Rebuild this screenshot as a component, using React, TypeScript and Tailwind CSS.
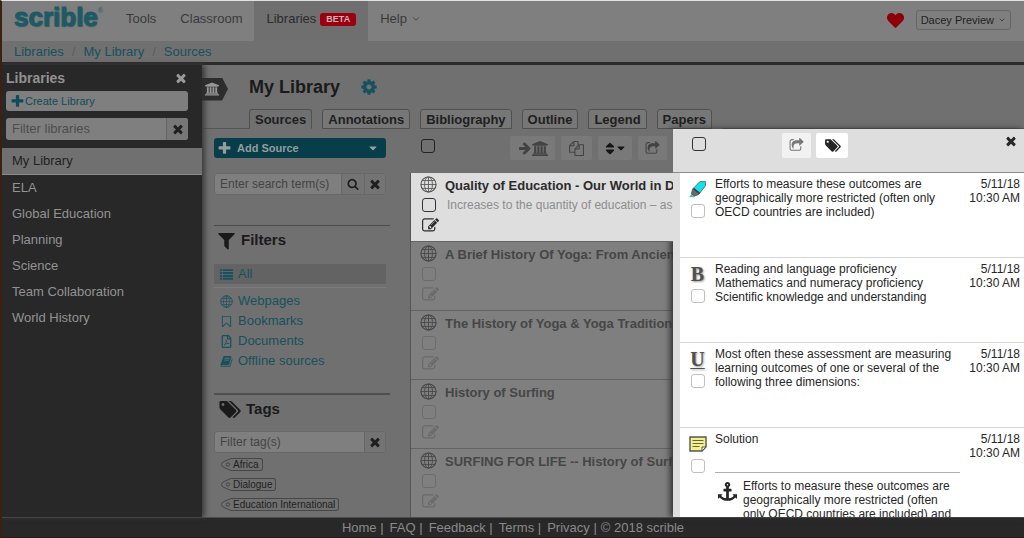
import { ReactNode } from "react";
import { FaCaretDown, FaHeart, FaRegFilePdf, FaSort } from "react-icons/fa";
import { FiChevronDown } from "react-icons/fi";

const PATHS = {
  times:
    "M1490 1322q0 40-28 68l-136 136q-28 28-68 28t-68-28l-294-294-294 294q-28 28-68 28t-68-28l-136-136q-28-28-28-68t28-68l294-294-294-294q-28-28-28-68t28-68l136-136q28-28 68-28t68 28l294 294 294-294q28-28 68-28t68 28l136 136q28 28 28 68t-28 68l-294 294 294 294q28 28 28 68z",
  plus: "M1600 736v192q0 40-28 68t-68 28h-416v416q0 40-28 68t-68 28h-192q-40 0-68-28t-28-68v-416h-416q-40 0-68-28t-28-68v-192q0-40 28-68t68-28h416v-416q0-40 28-68t68-28h192q40 0 68 28t28 68v416h416q40 0 68 28t28 68z",
  cog: "M1152 896q0-106-75-181t-181-75-181 75-75 181 75 181 181 75 181-75 75-181zm512-109v222q0 12-8 23t-20 13l-185 28q-19 54-39 91 35 50 107 138 10 12 10 25t-9 23q-27 37-99 108t-94 71q-12 0-26-9l-138-108q-44 23-91 38-16 136-29 186-7 28-36 28h-222q-14 0-24.500-8.500t-11.500-21.500l-28-184q-49-16-90-37l-141 107q-10 9-25 9-14 0-25-11-126-114-165-168-7-10-7-23 0-12 8-23 15-21 51-66.500t54-70.500q-27-50-41-99l-183-27q-13-2-21-12.500t-8-23.500v-222q0-12 8-23t19-13l186-28q14-46 39-92-40-57-107-138-10-12-10-24 0-10 9-23 26-36 98.500-107.500t94.500-71.500q13 0 26 10l138 107q44-23 91-38 16-136 29-186 7-28 36-28h222q14 0 24.500 8.500t11.500 21.500l28 184q49 16 90 37l142-107q9-9 24-9 13 0 25 10 129 119 165 170 7 8 7 22 0 12-8 23-15 21-51 66.500t-54 70.500q26 50 41 98l183 28q13 2 21 12.500t8 23.500z",
  bank: "M960 0l960 384v128h-128q0 26-20.500 45t-48.500 19h-1526q-28 0-48.500-19t-20.500-45h-128v-128zm-704 640h256v768h128v-768h256v768h128v-768h256v768h128v-768h256v768h59q28 0 48.500 19t20.500 45v64h-1664v-64q0-26 20.500-45t48.500-19h59v-768zm1595 960q28 0 48.500 19t20.500 45v128h-1920v-128q0-26 20.500-45t48.500-19h1782z",
  tags: "M576 448q0-53-37.500-90.500t-90.500-37.500-90.500 37.500-37.500 90.500 37.500 90.500 90.500 37.500 90.500-37.500 37.500-90.500zm1067 576q0 53-37 90l-491 492q-39 37-91 37-53 0-90-37l-715-716q-38-37-64.500-101t-26.500-117v-416q0-52 38-90t90-38h416q53 0 117 26.500t102 64.500l715 714q37 39 37 91zm384 0q0 53-37 90l-491 492q-39 37-91 37-36 0-59-14t-53-45l470-470q37-37 37-90 0-52-37-91l-715-714q-38-38-102-64.500t-117-26.500h224q53 0 117 26.500t102 64.500l715 714q37 39 37 91z",
  filter:
    "M1595 295q17 41-14 70l-493 493v742q0 42-39 59-13 5-25 5-27 0-45-19l-256-256q-19-19-19-45v-486l-493-493q-31-29-14-70 17-39 59-39h1280q42 0 59 39z",
  bookmark:
    "M1408 256h-1024v1242l423-406 89-85 89 85 423 406v-1242zm12-128q23 0 44 9 33 13 52.500 41t19.500 62v1289q0 34-19.500 62t-52.500 41q-19 8-44 8-48 0-83-32l-441-424-441 424q-36 33-83 33-23 0-44-9-33-13-52.500-41t-19.500-62v-1289q0-34 19.500-62t52.500-41q21-9 44-9h1048z",
  edit: "M888 1184l116-116-152-152-116 116v56h96v96h56zm440-720q-16-16-33 1l-350 350q-17 17-1 33t33-1l350-350q17-17 1-33zm80 594v190q0 119-84.500 203.500t-203.500 84.500h-832q-119 0-203.500-84.500t-84.500-203.500v-832q0-119 84.500-203.500t203.500-84.500h832q63 0 117 25 15 7 18 23 3 17-9 29l-49 49q-14 14-32 8-23-6-45-6h-832q-66 0-113 47t-47 113v832q0 66 47 113t113 47h832q66 0 113-47t47-113v-126q0-13 9-22l64-64q15-15 35-7t20 29zm-96-738l288 288-672 672h-288v-288zm444 132l-92 92-288-288 92-92q28-28 68-28t68 28l152 152q28 28 28 68t-28 68z",
  share:
    "M1472 989v259q0 119-84.500 203.500t-203.500 84.500h-832q-119 0-203.500-84.500t-84.500-203.500v-832q0-119 84.500-203.500t203.500-84.500h255q13 0 22.500 9.500t9.500 22.500q0 27-26 32-77 26-133 60-10 4-16 4h-112q-66 0-113 47t-47 113v832q0 66 47 113t113 47h832q66 0 113-47t47-113v-214q0-19 18-29 28-13 54-37 16-16 35-8 21 9 21 29zm237-496l-384 384q-18 19-45 19-12 0-25-5-39-17-39-59v-192h-160q-323 0-438 131-119 137-74 473 3 23-20 34-8 2-12 2-16 0-26-13-10-14-21-31t-39.500-68.500-49.500-99.500-38.500-114-17.500-122q0-49 3.500-91t14-90 28-88 47-81.500 68.500-74 94.500-61.500 124.500-48.500 159.500-30.500 196.500-11h160v-192q0-42 39-59 13-5 25-5 26 0 45 19l384 384q19 19 19 45t-19 45z",
  files:
    "M1696 384q40 0 68 28t28 68v1216q0 40-28 68t-68 28h-960q-40 0-68-28t-28-68v-288h-544q-40 0-68-28t-28-68v-672q0-40 20-88t48-76l408-408q28-28 76-48t88-20h416q40 0 68 28t28 68v328q68-40 128-40h416zm-544 213l-299 299h299v-299zm-640-384l-299 299h299v-299zm196 647l316-316v-416h-384v416q0 40-28 68t-68 28h-416v640h512v-256q0-40 20-88t48-76zm956 804v-1152h-384v416q0 40-28 68t-68 28h-416v640h896z",
  search:
    "M1216 832q0-185-131.500-316.500t-316.500-131.500-316.500 131.500-131.500 316.500 131.500 316.500 316.500 131.500 316.500-131.500 131.500-316.500zm512 832q0 52-38 90t-90 38q-54 0-90-38l-343-342q-179 124-399 124-143 0-273.500-55.500t-225-150-150-225-55.500-273.500 55.500-273.500 150-225 225-150 273.500-55.500 273.500 55.500 225 150 150 225 55.500 273.500q0 220-124 399l343 343q37 37 37 90z",
  arrow:
    "M1600 960q0 54-37 91l-651 651q-39 37-91 37-51 0-90-37l-75-75q-38-38-38-91t38-91l293-293h-704q-52 0-84.500-37.500t-32.500-90.500v-128q0-53 32.500-90.500t84.500-37.500h704l-293-294q-38-36-38-90t38-90l75-75q38-38 90-38 53 0 91 38l651 651q37 35 37 90z",
  anchor:
    "M960 256q0-26-19-45t-45-19-45 19-19 45 19 45 45 19 45-19 19-45zm832 928v352q0 22-20 30-8 2-12 2-13 0-23-9l-93-93q-119 143-318.500 226.500t-429.500 83.500-429.500-83.500-318.500-226.500l-93 93q-9 9-23 9-4 0-12-2-20-8-20-30v-352q0-14 9-23t23-9h352q22 0 30 20 8 19-7 35l-100 100q67 91 189.500 153.500t271.500 82.500v-647h-192q-26 0-45-19t-19-45v-128q0-26 19-45t45-19h192v-163q-58-34-93-92.500t-35-128.500q0-106 75-181t181-75 181 75 75 181q0 70-35 128.500t-93 92.500v163h192q26 0 45 19t19 45v128q0 26-19 45t-45 19h-192v647q149-20 271.500-82.500t189.500-153.500l-100-100q-15-16-7-35 8-20 30-20h352q14 0 23 9t9 23z",
  book: "M1703 478q40 57 18 129l-275 906q-19 64-76.500 107.500t-122.500 43.500h-923q-77 0-148.500-53.500t-99.500-131.500q-24-67-2-127 0-4 3-27t4-37q1-8-3-21.500t-3-19.500q2-11 8-21t16.500-23.500 16.500-23.500q23-38 45-91.500t30-91.500q3-10 .5-30t-.5-28q3-11 17-28t17-23q21-36 42-92t25-90q1-9-2.500-32t.5-28q4-13 22-30.500t22-22.500q19-26 42.500-84.500t27.500-96.500q1-8-3-25.500t-2-26.500q2-8 9-18t18-23 17-21q8-12 16.500-30.500t15-35 16-36 19.500-32 26.500-23.500 36-11.500 47.500 5.500l-1 3q38-9 51-9h761q74 0 114 56t18 130l-274 906q-36 119-71.500 153.500t-128.500 34.500h-869q-27 0-38 15-11 16-1 43 24 70 144 70h923q29 0 56-15.500t35-41.500l300-987q7-22 5-57 38 15 59 43zm-1064 2q-4 13 2 22.500t20 9.500h608q13 0 25.500-9.500t16.500-22.500l21-64q4-13-2-22.500t-20-9.500h-608q-13 0-25.500 9.500t-16.500 22.500zm-83 256q-4 13 2 22.500t20 9.500h608q13 0 25.500-9.500t16.500-22.500l21-64q4-13-2-22.500t-20-9.500h-608q-13 0-25.500 9.500t-16.500 22.500z",
  list: "M0 160h270v270h-270zM400 160h1392v270h-1392zM0 560h270v270h-270zM400 560h1392v270h-1392zM0 960h270v270h-270zM400 960h1392v270h-1392zM0 1360h270v270h-270zM400 1360h1392v270h-1392z",
};

const VIEW_WIDTH: Partial<Record<keyof typeof PATHS, number>> = { bank: 1920, tags: 2048 };

function Icon({ name, className }: { name: keyof typeof PATHS; className: string }) {
  return (
    <svg viewBox={`0 0 ${VIEW_WIDTH[name] ?? 1792} 1792`} fill="currentColor" aria-hidden="true" className={className}>
      <path d={PATHS[name]} />
    </svg>
  );
}

function Globe({ className }: { className: string }) {
  return (
    <svg viewBox="0 0 18 18" fill="none" stroke="currentColor" aria-hidden="true" className={className}>
      <circle cx="9" cy="9" r="8" strokeWidth="1.200" />
      <ellipse cx="9" cy="9" rx="4.200" ry="8" strokeWidth="0.900" />
      <path d="M9 1v16M1 9h16M2.500 4.800h13M2.500 13.200h13" strokeWidth="0.900" />
    </svg>
  );
}

function Highlighter() {
  return (
    <svg viewBox="0 0 18 18" aria-hidden="true" className="h-[18px] w-[18px]">
      <path d="M0.800 16.800L3 13.600l3 2.400-1.800 0.800z" fill="#19d3dc" stroke="#5b8c90" strokeWidth="0.500" />
      <path d="M4.200 8.200l6.400 5.200-2 1.600-3.200 1-3-2.600 0.800-3z" fill="#6a6a6a" stroke="#444" strokeWidth="0.700" />
      <path d="M11 1.500l5.800 0.300-0.500 4.200-5.600 7.200-6.200-5z" fill="#12e2ea" stroke="#5c6a6b" strokeWidth="0.900" />
      <path d="M4.600 8.600l6 4.800" stroke="#3c3c3c" strokeWidth="1.600" />
    </svg>
  );
}

function Note() {
  return (
    <svg viewBox="0 0 18 16" aria-hidden="true" className="h-[16px] w-[18px]">
      <path d="M1 1h16v10l-4 4H1z" fill="#f3f08e" stroke="#555" strokeWidth="1.400" />
      <path d="M17 11h-4v4z" fill="#fff" stroke="#555" />
      <path d="M3.500 4.500h11M3.500 7.500h11M3.500 10.500h7" stroke="#66653c" />
    </svg>
  );
}

function Checkbox({ label, tone }: { label: string; tone: string }) {
  return (
    <input
      type="checkbox"
      aria-label={label}
      className={`block h-[14px] w-[14px] shrink-0 appearance-none rounded-[3px] border ${tone}`}
    />
  );
}

const libraries = ["My Library", "ELA", "Global Education", "Planning", "Science", "Team Collaboration", "World History"];
const tabs = ["Sources", "Annotations", "Bibliography", "Outline", "Legend", "Papers"];
const tags = ["Africa", "Dialogue", "Education International"];
const footerLinks = ["Home", "FAQ", "Feedback", "Terms", "Privacy"];

const filters = [
  { label: "Webpages", icon: <Globe className="h-[13px] w-[13px]" /> },
  { label: "Bookmarks", icon: <Icon name="bookmark" className="h-[13px] w-[13px]" /> },
  { label: "Documents", icon: <FaRegFilePdf className="h-[13px] w-[13px]" /> },
  { label: "Offline sources", icon: <Icon name="book" className="h-[13px] w-[13px]" /> },
];

const sources = [
  { title: "Quality of Education - Our World in Data", desc: "Increases to the quantity of education – as measured", active: true },
  { title: "A Brief History Of Yoga: From Ancient Times" },
  { title: "The History of Yoga & Yoga Traditions" },
  { title: "History of Surfing" },
  { title: "SURFING FOR LIFE -- History of Surfing" },
];

const letter = "font-['Liberation_Serif',serif] text-[20px] leading-[18px] font-bold text-[#505050] [text-shadow:1px_1px_2px_#999]";

const annotations: { icon: ReactNode; text: string; anchor?: string }[] = [
  {
    icon: <Highlighter />,
    text: "Efforts to measure these outcomes are geographically more restricted (often only OECD countries are included)",
  },
  {
    icon: <span className={letter}>B</span>,
    text: "Reading and language proficiency\nMathematics and numeracy proficiency\nScientific knowledge and understanding",
  },
  {
    icon: <span className={`${letter} underline decoration-1 underline-offset-2`}>U</span>,
    text: "Most often these assessment are measuring learning outcomes of one or several of the following three dimensions:",
  },
  {
    icon: <Note />,
    text: "Solution",
    anchor:
      "Efforts to measure these outcomes are geographically more restricted (often only OECD countries are included) and",
  },
];

function Header() {
  return (
    <header className="flex h-10 shrink-0 bg-[#7f7f7f] text-[13px] text-[#3a3a3a]">
      <a
        href="#"
        className="ml-3 flex w-[88px] items-start text-[26px] leading-[32px] font-bold text-[#1c5a66] [-webkit-text-stroke:1px_#1c5a66] [text-shadow:1px_1px_1px_#4d5a5c]"
      >
        scrible
        <span className="mt-[6px] text-[7px] leading-[8px] font-normal [-webkit-text-stroke:0px] [text-shadow:none]">®</span>
      </a>
      <nav className="ml-3 flex">
        <a href="#" className="flex items-center px-3 pb-1">
          Tools
        </a>
        <a href="#" className="flex items-center px-3 pb-1">
          Classroom
        </a>
        <a href="#" className="flex items-center gap-1 bg-[#6f6f6f] px-3 pb-1 text-[#2c2c2c]">
          Libraries
          <span className="rounded-[3px] bg-[#9c0010] px-[6px] text-[9px] leading-[13px] font-bold text-[#c9b4b6]">BETA</span>
        </a>
        <button type="button" className="flex items-center gap-1 px-3 pb-1">
          Help
          <FiChevronDown className="h-[10px] w-[10px]" />
        </button>
      </nav>
      <div className="mr-[13px] ml-auto flex items-center gap-3 pb-[2px]">
        <button type="button" aria-label="Favorites">
          <FaHeart className="h-[17px] w-[17px] text-[#8d0009]" />
        </button>
        <button
          type="button"
          className="flex h-5 items-center gap-1 rounded-[3px] border border-[#666] px-1 text-[11px] text-[#222]"
        >
          Dacey Preview
          <FiChevronDown className="h-2 w-2" />
        </button>
      </div>
    </header>
  );
}

function LibrarySidebar() {
  return (
    <aside className="relative z-30 w-[200px] shrink-0 bg-[#282828] text-[13px] text-[#939393] shadow-[3px_0_5px_#3c3c3c]">
      <div className="flex h-[26px] items-center justify-between pr-[14px] pl-1">
        <h2 className="text-[14px] font-bold text-[#929292]">Libraries</h2>
        <button type="button" aria-label="Close libraries" className="text-[#9a9a9a]">
          <Icon name="times" className="h-[14px] w-[14px]" />
        </button>
      </div>
      <div className="pr-[14px] pl-1">
        <button
          type="button"
          className="flex h-5 w-full items-center rounded-[3px] bg-[#7f7f7f] px-1 text-[11px] text-[#114b57]"
        >
          <Icon name="plus" className="h-[15px] w-[15px]" />
          Create Library
        </button>
        <div className="mt-[7px] flex h-[22px] overflow-hidden rounded-[3px] bg-[#7f7f7f]">
          <input
            type="text"
            aria-label="Filter libraries"
            placeholder="Filter libraries"
            className="min-w-0 flex-1 px-[6px] placeholder:text-[#4d4d4d]"
          />
          <button
            type="button"
            aria-label="Clear filter"
            className="flex w-[22px] items-center justify-center border-l border-[#666] bg-[#777] text-[#1f1f1f]"
          >
            <Icon name="times" className="h-[14px] w-[14px]" />
          </button>
        </div>
      </div>
      <ul className="mt-2">
        {libraries.map((name, i) => (
          <li key={name}>
            <a
              href="#"
              className={`block px-[10px] leading-[26px] ${i === 0 ? "border-b border-[#888] bg-[#707070] text-[#1f1f1f]" : ""}`}
            >
              {name}
            </a>
          </li>
        ))}
      </ul>
    </aside>
  );
}

function SourceFilters() {
  return (
    <div className="w-[208px] shrink-0 pt-[9px] pr-5 pl-3 text-[13px] text-[#17515d]">
      <button
        type="button"
        className="flex h-5 w-[172px] items-center rounded-[3px] bg-[#073e4a] px-[3px] text-[11px] font-bold text-[#969c9d]"
      >
        <Icon name="plus" className="mr-[5px] h-[15px] w-[15px]" />
        Add Source
        <FaCaretDown className="mr-1 ml-auto h-3 w-3" />
      </button>
      <div className="mt-[15px] mr-1 flex h-[22px] overflow-hidden rounded-[3px] border border-[#686868] bg-[#7f7f7f]">
        <input
          type="search"
          aria-label="Enter search term(s)"
          placeholder="Enter search term(s)"
          className="min-w-0 flex-1 pl-[5px] text-[12px] placeholder:text-[#444]"
        />
        <button
          type="button"
          aria-label="Search"
          className="flex w-[23px] items-center justify-center border-l border-[#666] bg-[#747474] text-[#1f1f1f]"
        >
          <Icon name="search" className="h-3 w-3" />
        </button>
        <button
          type="button"
          aria-label="Clear search"
          className="flex w-[21px] items-center justify-center border-l border-[#666] bg-[#747474] text-[#1f1f1f]"
        >
          <Icon name="times" className="h-[14px] w-[14px]" />
        </button>
      </div>
      <section className="mt-[30px] border-t border-[#4c4c4c]">
        <h2 className="flex h-7 items-center gap-1 pl-[2px] text-[15px] font-bold text-[#1a1a1a]">
          <Icon name="filter" className="h-[21px] w-[21px]" />
          Filters
        </h2>
        <a href="#" className="mt-[10px] mr-1 flex h-5 items-center gap-[5px] bg-[#636363] px-[6px]">
          <Icon name="list" className="h-[13px] w-[13px]" />
          All
        </a>
        <ul className="mt-[3px] mr-1 border-t border-[#7c7c7c] pt-[3px]">
          {filters.map((filter) => (
            <li key={filter.label}>
              <a href="#" className="flex h-5 items-center gap-[5px] px-[6px]">
                {filter.icon}
                {filter.label}
              </a>
            </li>
          ))}
        </ul>
      </section>
      <section className="mt-[22px] border-t-2 border-[#4f4f4f]">
        <h2 className="flex h-7 items-center gap-[5px] pl-1 text-[15px] font-bold text-[#1a1a1a]">
          <Icon name="tags" className="h-[21px] w-[23px]" />
          Tags
        </h2>
        <div className="mt-2 mr-1 flex h-[22px] overflow-hidden rounded-[3px] border border-[#686868] bg-[#7f7f7f]">
          <input
            type="text"
            aria-label="Filter tag(s)"
            placeholder="Filter tag(s)"
            className="min-w-0 flex-1 pl-[5px] text-[12px] placeholder:text-[#444]"
          />
          <button
            type="button"
            aria-label="Clear tag filter"
            className="flex w-[21px] items-center justify-center border-l border-[#666] bg-[#747474] text-[#1f1f1f]"
          >
            <Icon name="times" className="h-[14px] w-[14px]" />
          </button>
        </div>
        <ul className="mt-px pl-[7px]">
          {tags.map((tag) => (
            <li key={tag} className="flex h-5 items-center">
              <a href="#" className="flex items-center text-[10px] leading-[11px] text-[#1f1f1f]">
                <svg viewBox="0 0 10 13" fill="none" stroke="#474747" aria-hidden="true" className="h-[13px] w-[10px]">
                  <path d="M10 0.500L3 3.500Q0.500 4.500 0.500 6.500T3 9.500L10 12.500" />
                  <circle cx="7" cy="6.500" r="1.700" />
                </svg>
                <span className="rounded-r-[3px] border border-l-0 border-[#474747] pr-[3px] pl-[2px]">{tag}</span>
              </a>
            </li>
          ))}
        </ul>
      </section>
    </div>
  );
}

function SourceList() {
  const tool = "flex h-6 items-center justify-center rounded-[2px] bg-[#797979]";
  return (
    <div className="flex min-w-0 flex-1 flex-col">
      <div className="relative z-20 flex h-11 shrink-0 items-start bg-[#707070] pt-[7px] pr-[6px] pl-[11px]">
        <div className="pt-[3px]">
          <Checkbox label="Select all sources" tone="border-[#222]" />
        </div>
        <div className="ml-auto flex gap-[6px] text-[#434343]">
          <button type="button" aria-label="Add to library" className={`${tool} w-[45px]`}>
            <Icon name="arrow" className="h-[14px] w-[14px]" />
            <Icon name="bank" className="h-[15px] w-4" />
          </button>
          <button type="button" aria-label="Copy" className={`${tool} w-[31px]`}>
            <Icon name="files" className="h-[15px] w-[15px]" />
          </button>
          <button type="button" aria-label="Sort" className={`${tool} w-[34px] text-[#161616]`}>
            <FaSort className="h-[15px] w-[12px]" />
            <FaCaretDown className="h-3 w-[10px]" />
          </button>
          <button type="button" aria-label="Share" className={`${tool} w-[29px]`}>
            <Icon name="share" className="h-[15px] w-[15px]" />
          </button>
        </div>
      </div>
      <ul className="min-h-0 flex-1 overflow-hidden border-l border-[#555] bg-[#7f7f7f]">
        {sources.map((source) => (
          <li
            key={source.title}
            className={`flex h-[69px] gap-2 border-b border-[#636363] pl-[9px] text-[13px] ${
              source.active ? "relative z-20 bg-[#dedede] text-[#2b2b2b]" : "text-[#464646]"
            }`}
          >
            <div className="flex w-[17px] shrink-0 flex-col gap-[5px] pt-[3px]">
              <Globe className={source.active ? "h-[17px] w-[17px] text-[#555]" : "h-[17px] w-[17px]"} />
              <div className="pl-[2px]">
                <Checkbox label={`Select ${source.title}`} tone={source.active ? "border-[#333]" : "border-[#6c6c6c]"} />
              </div>
              <button type="button" aria-label="Edit source" className={source.active ? "pl-[2px]" : "pl-[2px] text-[#6a6a6a]"}>
                <Icon name="edit" className="h-[17px] w-[17px]" />
              </button>
            </div>
            <div className="min-w-0 flex-1 overflow-hidden whitespace-nowrap">
              <a href="#" className="block pt-1 leading-[18px] font-bold">
                {source.title}
              </a>
              {source.desc && <p className="pl-[2px] text-[12px] leading-5 text-[#8d8d8d]">{source.desc}</p>}
            </div>
          </li>
        ))}
      </ul>
    </div>
  );
}

function AnnotationPanel() {
  return (
    <div className="relative z-10 flex w-[351px] shrink-0 flex-col bg-[#dedede] text-[#262626] shadow-[-3px_0_6px_#333]">
      <div className="flex h-11 shrink-0 items-start border-b border-[#8c8c8c] pt-1 pr-[6px] pl-[19px]">
        <div className="pt-1">
          <Checkbox label="Select all annotations" tone="border-[#333]" />
        </div>
        <div className="ml-[76px] flex gap-[5px]">
          <button
            type="button"
            aria-label="Share annotations"
            className="flex h-[25px] w-[29px] items-center justify-center rounded-[2px] bg-[#f2f2f2] text-[#777]"
          >
            <Icon name="share" className="h-[15px] w-[15px]" />
          </button>
          <button
            type="button"
            aria-label="Tag annotations"
            className="flex h-[25px] w-8 items-center justify-center rounded-[2px] bg-white"
          >
            <Icon name="tags" className="h-[15px] w-[17px]" />
          </button>
        </div>
        <button type="button" aria-label="Close annotations" className="mt-px ml-auto">
          <Icon name="times" className="h-[14px] w-[14px]" />
        </button>
      </div>
      <ul className="ml-[7px] min-h-0 flex-1 overflow-hidden bg-white text-[12px] leading-[14px]">
        {annotations.map((note) => (
          <li key={note.text} className="flex min-h-[85px] border-b border-[#d6d6d6] pt-1 pr-1">
            <div className="flex w-[35px] shrink-0 flex-col items-center gap-[6px] pt-[2px] text-center">
              <div className="flex h-[19px] items-center">{note.icon}</div>
              <Checkbox label={`Select ${note.text}`} tone="border-[#c0c0c0]" />
            </div>
            <div className="min-w-0 flex-1">
              <p className="whitespace-pre-line">{note.text}</p>
              {note.anchor && (
                <div className="mt-[26px] flex gap-[6px] border-t border-[#b0b0b0] pt-[6px] pl-[3px]">
                  <Icon name="anchor" className="mt-[3px] h-[19px] w-[19px] shrink-0" />
                  <p>{note.anchor}</p>
                </div>
              )}
            </div>
            <p className="ml-2 w-[52px] shrink-0 text-right">
              5/11/18
              <br />
              10:30 AM
            </p>
          </li>
        ))}
      </ul>
    </div>
  );
}

export default function App() {
  return (
    <div className="flex h-screen flex-col overflow-hidden border-t border-b border-l-2 border-t-[#e0e0e0] border-b-[#2a1414] border-l-[#3d1f18] bg-[#707070] font-['Liberation_Sans',Arial,sans-serif]">
      <Header />
      <nav
        aria-label="Breadcrumb"
        className="flex h-6 shrink-0 items-center gap-2 border-b-[3px] border-[#2b2b2b] pl-3 text-[13px] text-[#17515d]"
      >
        <a href="#">Libraries</a>
        <span className="text-[#5c5c5c]">/</span>
        <a href="#">My Library</a>
        <span className="text-[#5c5c5c]">/</span>
        <a href="#">Sources</a>
      </nav>
      <div className="flex min-h-0 flex-1">
        <LibrarySidebar />
        <main className="flex min-w-0 flex-1 flex-col">
          <div className="flex h-11 shrink-0 items-center">
            <button
              type="button"
              aria-label="Show libraries"
              className="relative z-30 mt-1 flex h-[23px] w-[26px] items-center bg-[#2d2d2d] pl-[3px] text-[#979797] [clip-path:polygon(0_0,20px_0,26px_50%,20px_100%,0_100%)]"
            >
              <Icon name="bank" className="h-[14px] w-[14px]" />
            </button>
            <h1 className="ml-[21px] text-[18px] font-bold text-[#1a1a1a]">My Library</h1>
            <button type="button" aria-label="Library settings" className="ml-5 text-[#17515d]">
              <Icon name="cog" className="h-[18px] w-[18px]" />
            </button>
          </div>
          <div role="tablist" className="flex h-5 shrink-0 gap-[10px] text-[13px] font-bold text-[#1f1f1f]">
            <div className="-mr-[10px] w-[47px] border-b border-[#555]" />
            {tabs.map((tab, i) => (
              <button
                key={tab}
                type="button"
                role="tab"
                aria-selected={i === 0}
                className={`rounded-t-[3px] border border-[#505050] px-[5px] ${i === 0 ? "border-b-[#707070]" : "bg-[#777]"}`}
              >
                {tab}
              </button>
            ))}
            <div className="flex-1 border-b border-[#555]" />
          </div>
          <div className="flex min-h-0 flex-1">
            <SourceFilters />
            <SourceList />
            <AnnotationPanel />
          </div>
        </main>
      </div>
      <footer className="flex h-5 shrink-0 items-center justify-center border-t border-[#4d4d4d] bg-[#282828] text-[13px] text-[#8a8a8a]">
        {footerLinks.map((link) => (
          <span key={link}>
            <a href="#" className={link === "Home" ? "" : "ml-[6px]"}>
              {link}
            </a>{" "}
            |
          </span>
        ))}
        <span className="ml-1">© 2018 scrible</span>
      </footer>
    </div>
  );
}
